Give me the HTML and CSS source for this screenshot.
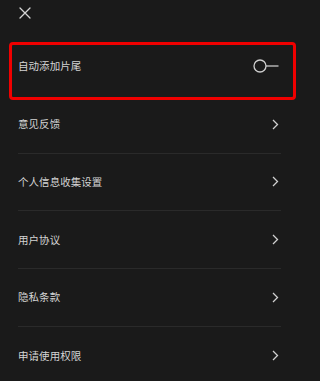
FILE: index.html
```html
<!DOCTYPE html>
<html lang="zh">
<head>
<meta charset="utf-8">
<link rel="stylesheet" href="styles.css">
</head>
<body>
<div class="page">
  <div class="header">
    <svg class="close" width="12" height="12" viewBox="0 0 12 12"><path d="M1 1 L11 11 M11 1 L1 11" stroke="#d6d6d6" stroke-width="1.3" fill="none" stroke-linecap="round"/></svg>
  </div>
  <div class="list">
    <div class="row first">
      <span class="label">自动添加片尾</span>
      <svg class="toggle" width="26" height="14" viewBox="0 0 26 14"><line x1="13" y1="7" x2="25.5" y2="7" stroke="#8a8a8a" stroke-width="2"/><circle cx="7" cy="7" r="6" stroke="#cfcfcf" stroke-width="1.3" fill="none"/></svg>
    </div>
    <div class="row">
      <span class="label">意见反馈</span>
      <svg class="chev" width="7" height="11" viewBox="0 0 7 11"><path d="M1 1 L5.5 5.5 L1 10" stroke="#d0d0d0" stroke-width="1.3" fill="none"/></svg>
    </div>
    <div class="row">
      <span class="label">个人信息收集设置</span>
      <svg class="chev" width="7" height="11" viewBox="0 0 7 11"><path d="M1 1 L5.5 5.5 L1 10" stroke="#d0d0d0" stroke-width="1.3" fill="none"/></svg>
    </div>
    <div class="row">
      <span class="label">用户协议</span>
      <svg class="chev" width="7" height="11" viewBox="0 0 7 11"><path d="M1 1 L5.5 5.5 L1 10" stroke="#d0d0d0" stroke-width="1.3" fill="none"/></svg>
    </div>
    <div class="row">
      <span class="label">隐私条款</span>
      <svg class="chev" width="7" height="11" viewBox="0 0 7 11"><path d="M1 1 L5.5 5.5 L1 10" stroke="#d0d0d0" stroke-width="1.3" fill="none"/></svg>
    </div>
    <div class="row last">
      <span class="label">申请使用权限</span>
      <svg class="chev" width="7" height="11" viewBox="0 0 7 11"><path d="M1 1 L5.5 5.5 L1 10" stroke="#d0d0d0" stroke-width="1.3" fill="none"/></svg>
    </div>
  </div>
  <div class="highlight"></div>
</div>
</body>
</html>
```

FILE: styles.css
```css
html, body {
  margin: 0;
  padding: 0;
  background: #1a1a1a;
}
.page {
  position: relative;
  width: 300px;
  height: 381px;
  overflow: hidden;
  background: #1a1a1a;
  font-family: "Noto Sans CJK SC", "Noto Sans", sans-serif;
}
.header {
  height: 38px;
  display: flex;
  align-items: flex-start;
  padding-left: 19px;
  box-sizing: border-box;
  padding-top: 6.5px;
}
.close {
  display: block;
}
.list {
  margin: 0 19px 0 18px;
}
.row {
  height: 57.8px;
  box-sizing: border-box;
  border-bottom: 1px solid #2a2a2a;
  display: flex;
  align-items: center;
  justify-content: space-between;
}
.row.first {
  border-bottom-color: transparent;
}
.row.last {
  border-bottom: none;
}
.label {
  font-size: 10.5px;
  color: #d4d4d4;
  line-height: 1;
  letter-spacing: 0.05px;
}
.chev {
  display: block;
  margin-right: 2.5px;
}
.toggle {
  display: block;
  margin-right: 2.5px;
}
.highlight {
  position: absolute;
  left: 9px;
  top: 42px;
  width: 287px;
  height: 58px;
  box-sizing: border-box;
  border: 3px solid #f00000;
  border-radius: 4px;
}
```
